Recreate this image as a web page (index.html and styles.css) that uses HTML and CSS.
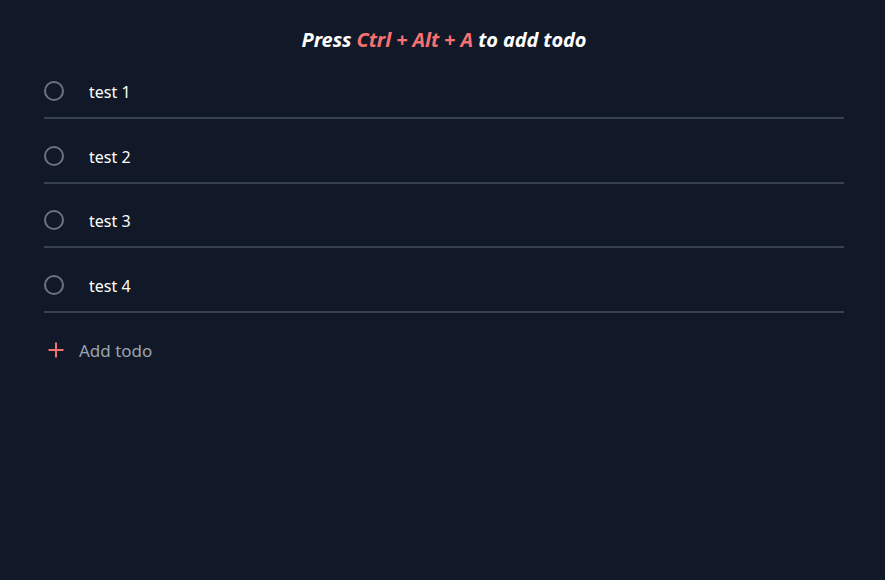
FILE: index.html
```html
<!DOCTYPE html>
<html>
<head>
<meta charset="utf-8">
<link rel="stylesheet" href="styles.css">
</head>
<body>
<div class="app">
  <h1 class="hint">Press <span class="key">Ctrl + Alt + A</span> to add todo</h1>
  <ul class="list">
    <li class="item"><span class="check"></span><span class="label">test 1</span></li>
    <li class="item"><span class="check"></span><span class="label">test 2</span></li>
    <li class="item"><span class="check"></span><span class="label">test 3</span></li>
    <li class="item"><span class="check"></span><span class="label">test 4</span></li>
  </ul>
  <div class="add">
    <svg class="plus" width="20" height="20" viewBox="0 0 20 20"><path d="M10 2.5V17.5M2.5 10H17.5" stroke="#f87171" stroke-width="2" fill="none"/></svg>
    <span class="add-label">Add todo</span>
  </div>
</div>
</body>
</html>
```
FILE: styles.css
```css
html, body {
  margin: 0;
  padding: 0;
  background: #111827;
  height: 100%;
}
body {
  font-family: "Noto Sans", "Open Sans", sans-serif;
  color: #ffffff;
}
.app {
  width: 800px;
  margin-left: 44px;
  padding-top: 28px;
}
.hint {
  margin: 0 0 2px;
  font-size: 20px;
  line-height: 24px;
  font-weight: 700;
  font-style: italic;
  text-align: center;
  letter-spacing: -0.1px;
}
.key {
  color: #f87171;
}
.list {
  list-style: none;
  margin: 0;
  padding: 0;
}
.item {
  display: flex;
  align-items: center;
  gap: 25px;
  padding: 27px 0 16px;
  border-bottom: 2px solid #374151;
  height: 20px;
  box-sizing: content-box;
}
.item + .item {
  padding-top: 26.67px;
}
.check {
  width: 16px;
  height: 16px;
  border: 2px solid #6b7280;
  border-radius: 50%;
  flex: none;
}
.label {
  font-size: 16px;
  line-height: 20px;
  padding-top: 2px;
  color: #ffffff;
}
.add {
  display: flex;
  align-items: center;
  gap: 13px;
  padding-top: 27px;
  padding-left: 2px;
}
.plus {
  flex: none;
}
.add-label {
  font-size: 17px;
  line-height: 20px;
  padding-top: 1px;
  color: #9ca3af;
}
```
